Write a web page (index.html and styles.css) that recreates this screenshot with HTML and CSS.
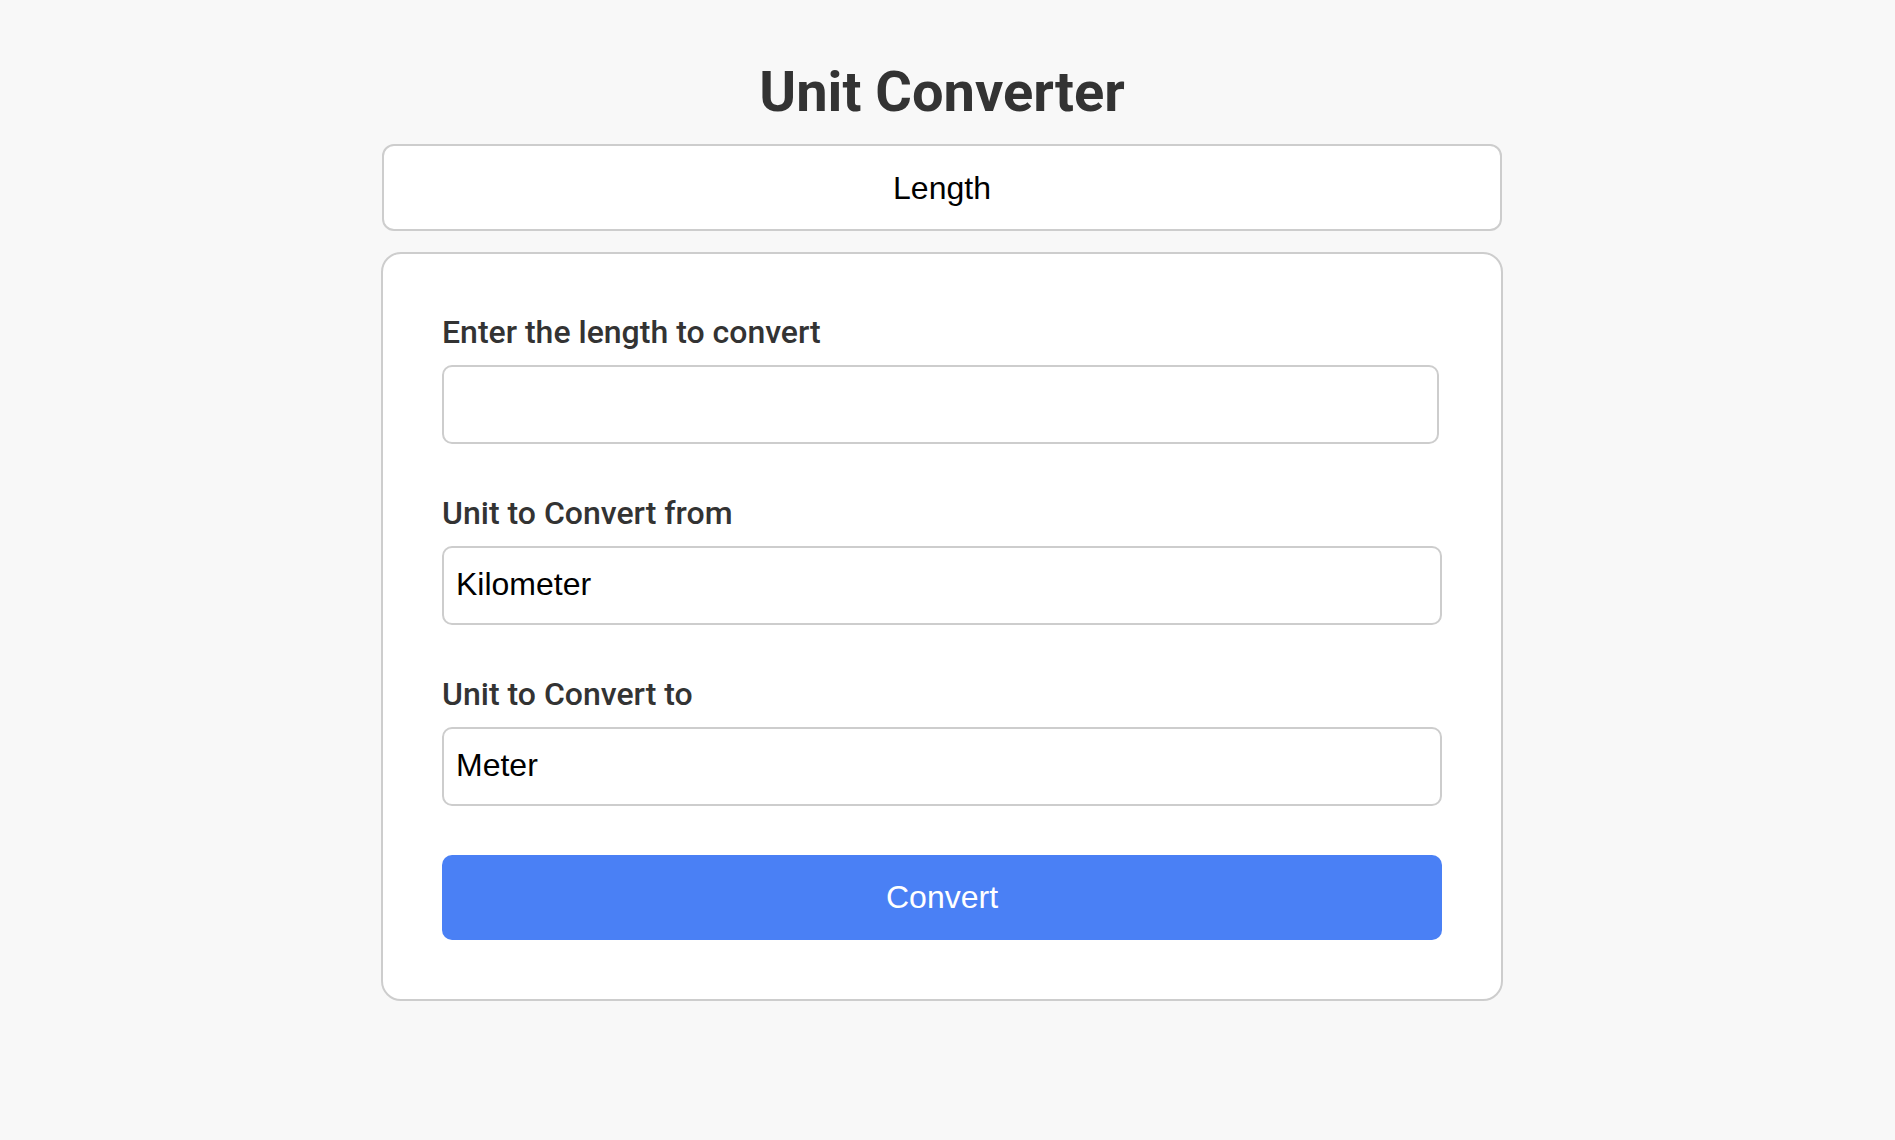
FILE: index.html
```html
<!DOCTYPE html>
<html lang="en">
<head>
<meta charset="utf-8">
<title>Unit Converter</title>
<link rel="stylesheet" href="styles.css">
</head>
<body>
<main class="page">
  <h1 class="title">Unit Converter</h1>
  <select class="category">
    <option>Length</option>
    <option>Weight</option>
    <option>Temperature</option>
  </select>
  <form class="card">
    <div class="group">
      <label class="label" for="amount">Enter the length to convert</label>
      <input class="field field-input" id="amount" type="text">
    </div>
    <div class="group">
      <label class="label" for="from">Unit to Convert from</label>
      <select class="field" id="from">
        <option>Kilometer</option>
        <option>Meter</option>
      </select>
    </div>
    <div class="group">
      <label class="label" for="to">Unit to Convert to</label>
      <select class="field" id="to">
        <option>Meter</option>
        <option>Kilometer</option>
      </select>
    </div>
    <button class="convert" type="button">Convert</button>
  </form>
</main>
</body>
</html>
```

FILE: styles.css
```css
html, body {
  margin: 0;
  padding: 0;
}

body {
  background: #f8f8f8;
  font-family: Roboto, "Liberation Sans", Arial, sans-serif;
  color: #333;
}

.page {
  width: 1122px;
  margin: 0 auto;
  padding: 59px 11px 0 0;
  box-sizing: content-box;
  display: flex;
  flex-direction: column;
}

.title {
  margin: 0 0 19px;
  font-size: 56px;
  line-height: 66px;
  font-weight: 700;
  text-align: center;
  color: #333;
}

.category {
  appearance: none;
  -webkit-appearance: none;
  box-sizing: border-box;
  width: 1120px;
  height: 87px;
  margin: 0 1px 21px;
  padding: 0;
  background: #fff;
  border: 2px solid #cdcdcd;
  border-radius: 12px;
  font-family: "Liberation Sans", Arial, sans-serif;
  font-size: 32px;
  color: #000;
  text-align: center;
  text-align-last: center;
  outline: none;
}

.card {
  box-sizing: border-box;
  width: 1122px;
  margin: 0;
  padding: 60px 59px 59px;
  background: #fff;
  border: 2px solid #cdcdcd;
  border-radius: 20px;
  display: flex;
  flex-direction: column;
}

.group {
  display: flex;
  flex-direction: column;
  align-items: flex-start;
  margin-bottom: 51px;
}

.label {
  font-size: 32px;
  line-height: 37px;
  font-weight: 500;
  color: #333;
  margin-bottom: 14px;
}

.field {
  appearance: none;
  -webkit-appearance: none;
  box-sizing: border-box;
  width: 100%;
  height: 79px;
  margin: 0;
  padding: 0 12px 3px;
  background: #fff;
  border: 2px solid #cdcdcd;
  border-radius: 10px;
  font-family: "Liberation Sans", Arial, sans-serif;
  font-size: 32px;
  color: #000;
  outline: none;
}

.field-input {
  width: calc(100% - 3px);
}

.convert {
  box-sizing: border-box;
  width: 100%;
  height: 85px;
  margin: -2px 0 0;
  padding: 0;
  border: none;
  border-radius: 10px;
  background: #4a80f5;
  color: #fff;
  font-family: "Liberation Sans", Arial, sans-serif;
  font-size: 32px;
  cursor: pointer;
}
```
